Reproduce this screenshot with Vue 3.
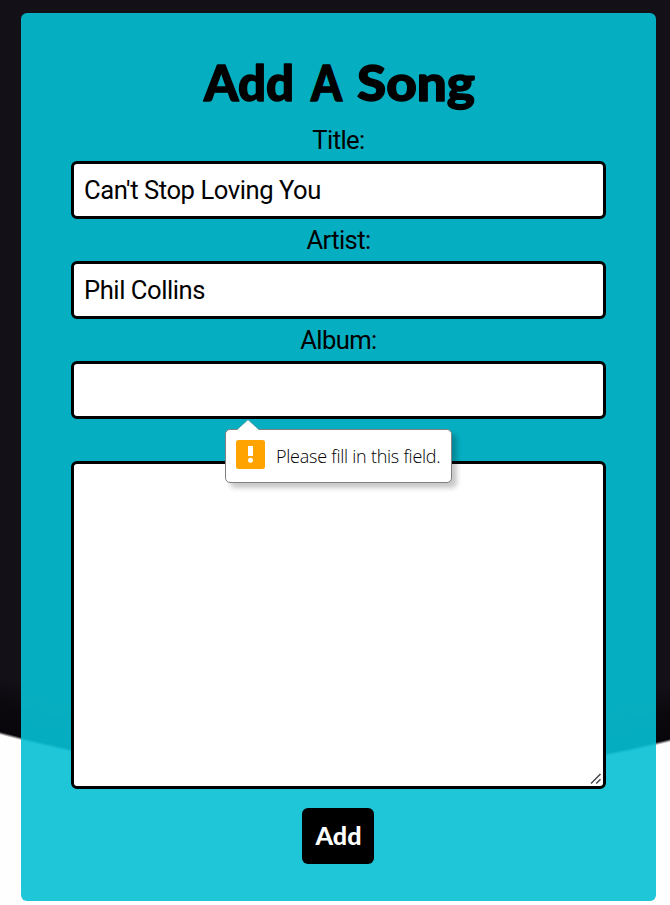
<script setup>
import { ref } from 'vue'

const fields = ref([
  { id: 'title', label: 'Title:', value: "Can't Stop Loving You" },
  { id: 'artist', label: 'Artist:', value: 'Phil Collins' },
  { id: 'album', label: 'Album:', value: '', invalid: true },
])
const notes = ref('')
</script>

<template>
  <main class="page">
    <form class="card" @submit.prevent>
      <h1 class="heading">
        <svg width="276" height="64" viewBox="0 0 276 64">
          <text x="3" y="48.5" textLength="90" lengthAdjust="spacingAndGlyphs">Add</text>
          <text x="110" y="48.5" textLength="31" lengthAdjust="spacingAndGlyphs">A</text>
          <text x="156" y="48.5" textLength="118" lengthAdjust="spacingAndGlyphs">Song</text>
        </svg>
      </h1>
      <div v-for="f in fields" :key="f.id" class="field">
        <label :for="f.id">{{ f.label }}</label>
        <input :id="f.id" v-model="f.value" type="text" autocomplete="off" spellcheck="false" />
        <div v-if="f.invalid" class="bubble" role="alert">
          <svg class="tip" width="22" height="11" viewBox="0 0 22 11">
            <path d="M0 11 L11 1 L22 11Z" fill="#fff" />
            <path d="M0 10.5 L11 .7 L22 10.5" fill="none" stroke="#808b8d" stroke-width=".5" />
          </svg>
          <svg class="warn" width="29" height="29" viewBox="0 0 29 29">
            <rect width="29" height="29" rx="2.5" fill="#ffa300" />
            <rect x="12" y="6" width="5" height="10" fill="#fff" />
            <circle cx="14.5" cy="20.3" r="2.5" fill="#fff" />
          </svg>
          <span class="message">Please fill in this field.</span>
        </div>
      </div>
      <div class="area">
        <textarea v-model="notes"></textarea>
        <svg class="grip" width="12" height="12" viewBox="0 0 12 12">
          <path d="M1 10.5 L10.5 1 M6.2 10.5 L10.5 6.2" stroke="#44444a" stroke-width="1.5" fill="none" />
        </svg>
      </div>
      <button type="submit">
        <svg width="48" height="30" viewBox="0 0 48 30">
          <text x="1.5" y="24" textLength="46" lengthAdjust="spacingAndGlyphs">Add</text>
        </svg>
      </button>
    </form>
  </main>
</template>

<style>
body {
  margin: 0;
  background: #fff;
  overflow: hidden;
}
</style>

<style scoped>
.page {
  box-sizing: border-box;
  height: 905px;
  padding: 13px 14px 4px 21px;
  background: radial-gradient(circle at 349px -560px, #131117 1285px, #0b090e 1310px, #08060a 1338px, #fefefe 1341px);
  font-family: Roboto, sans-serif;
}
.card {
  box-sizing: border-box;
  display: flex;
  flex-direction: column;
  align-items: center;
  height: 888px;
  padding: 39px 50px 0;
  border-radius: 6px;
  background: rgba(6, 192, 212, 0.9);
}
.heading {
  margin: 0;
  height: 67px;
}
.heading svg,
button svg {
  display: block;
  overflow: visible;
}
.heading text {
  font: 900 49px Lato, sans-serif;
  fill: #000;
  stroke: #000;
  stroke-width: 1.4px;
  stroke-linejoin: round;
}
.field {
  position: relative;
  width: 100%;
  height: 100px;
}
label {
  display: block;
  height: 42px;
  line-height: 43px;
  font-size: 25.6px;
  letter-spacing: -0.6px;
  text-align: center;
  color: #000;
}
input,
textarea {
  box-sizing: border-box;
  display: block;
  width: 100%;
  margin: 0;
  border: 3px solid #000;
  border-radius: 6px;
  background: #fff;
  color: #000;
  font: 25.6px Roboto, sans-serif;
  letter-spacing: -0.44px;
  outline: none;
}
input {
  height: 58px;
  padding: 0 10px;
}
.bubble {
  position: absolute;
  z-index: 2;
  left: 154px;
  top: 110px;
  box-sizing: border-box;
  display: flex;
  align-items: center;
  gap: 11px;
  width: 227px;
  height: 54px;
  padding: 0 0 4px 10px;
  border: 1px solid #808080;
  border-radius: 5px;
  background: #fff;
  box-shadow: 5px 5px 5px rgba(0, 0, 0, 0.22);
  font: 300 18px 'Open Sans', sans-serif;
  letter-spacing: -0.25px;
  white-space: nowrap;
  color: #000;
}
.message {
  padding-top: 4px;
}
.tip {
  position: absolute;
  left: 11px;
  top: -11px;
}
.area {
  position: relative;
  width: 100%;
  margin-top: 42px;
}
textarea {
  height: 328px;
  padding: 10px;
  resize: none;
}
.grip {
  position: absolute;
  right: 4px;
  bottom: 4px;
}
button {
  box-sizing: border-box;
  display: flex;
  align-items: center;
  justify-content: center;
  width: 72px;
  height: 56px;
  margin: 19px 1px 0 0;
  padding: 0;
  border: 0;
  border-radius: 6px;
  background: #000;
}
button text {
  font: 900 25px Lato, sans-serif;
  fill: #fff;
}
</style>
